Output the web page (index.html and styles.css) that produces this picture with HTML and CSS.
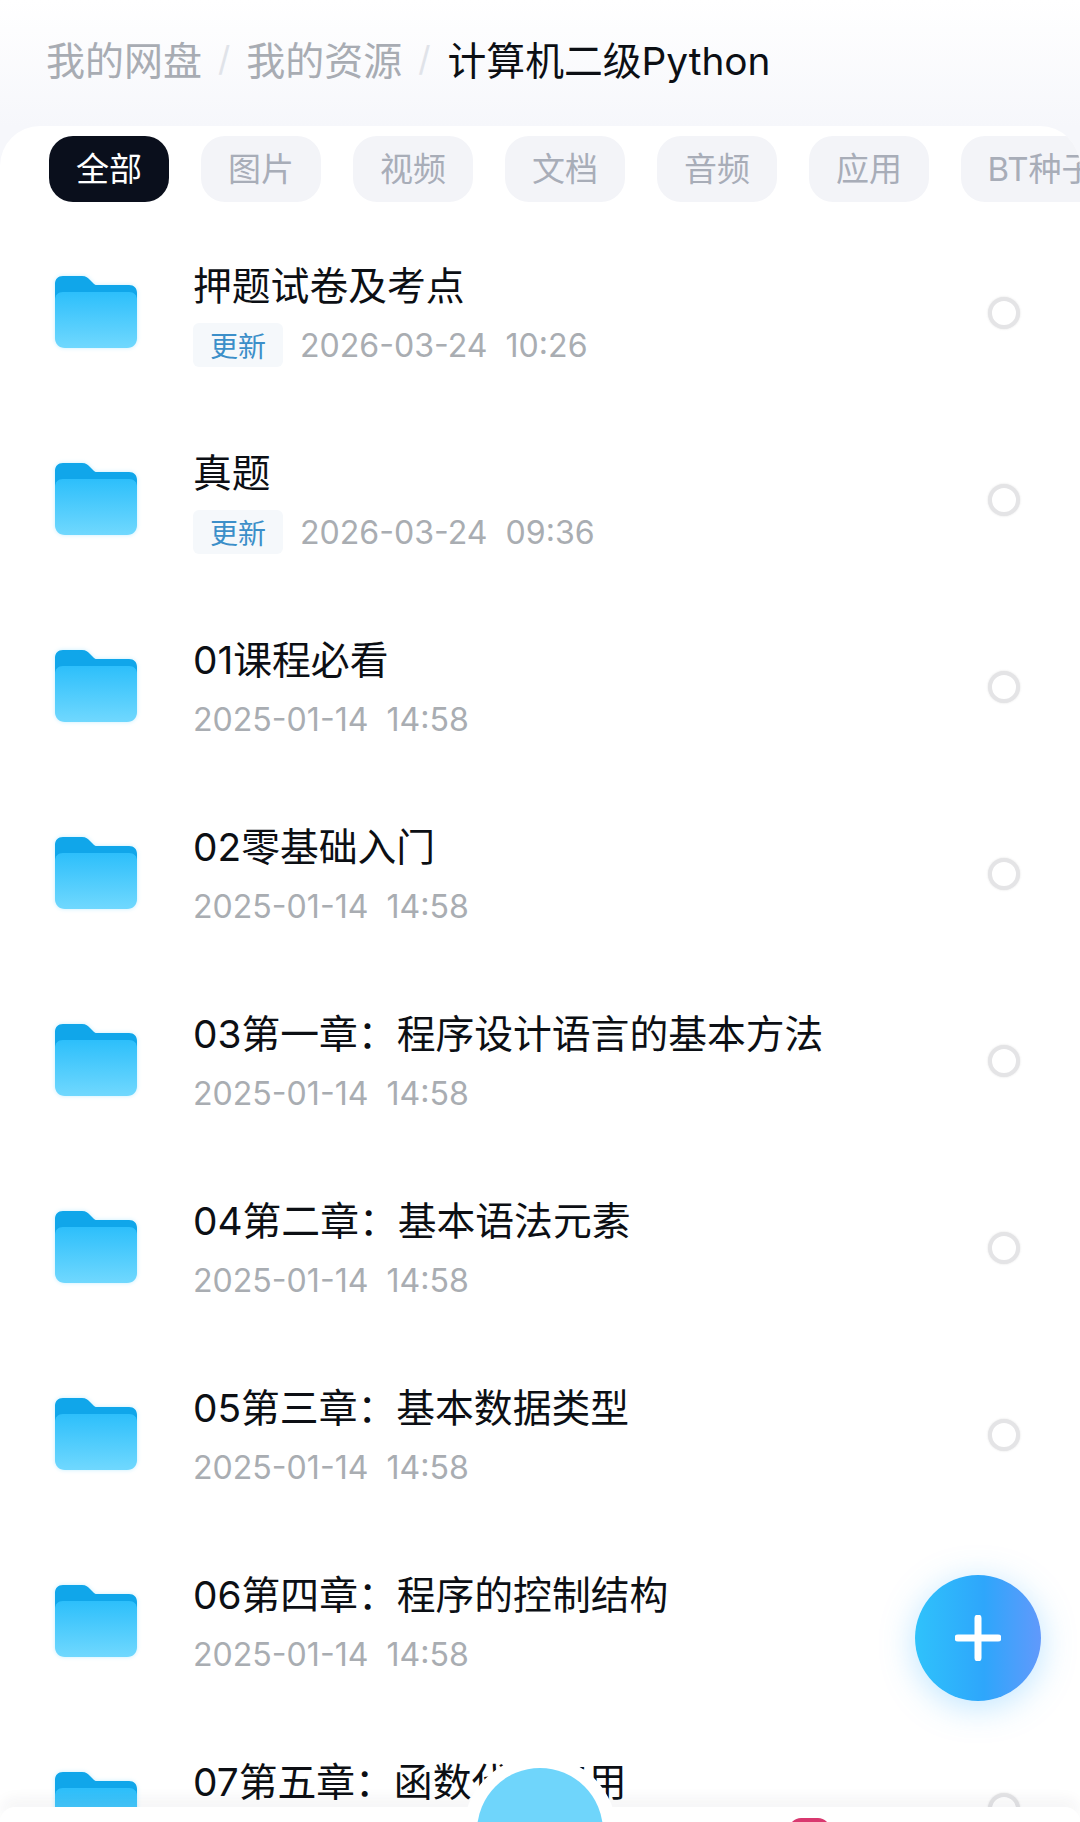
FILE: index.html
```html
<!DOCTYPE html>
<html lang="zh-CN">
<head>
<meta charset="utf-8">
<title>计算机二级Python</title>
<link rel="stylesheet" href="styles.css">
</head>
<body>
<svg class="defs" width="0" height="0" aria-hidden="true">
  <defs>
    <linearGradient id="front" x1="0" y1="0" x2="0" y2="1">
      <stop offset="0" stop-color="#2dbffb"/>
      <stop offset="1" stop-color="#70d8fe"/>
    </linearGradient>
    <symbol id="folder" viewBox="0 0 82 72">
      <path d="M8 0H27C31 0 33 2 35 4L39 8C40 9 41 9 43 9H74C79 9 82 12 82 17V30H0V8C0 3 3 0 8 0Z" fill="#10a6ea"/>
      <path d="M8 16H74C79 16 82 19 82 24V62C82 68 78 72 72 72H10C4 72 0 68 0 62V24C0 19 3 16 8 16Z" fill="url(#front)"/>
    </symbol>
  </defs>
</svg>
<div class="page">
  <header class="crumbs">
    <span class="crumb">我的网盘</span><span class="sep">/</span>
    <span class="crumb">我的资源</span><span class="sep">/</span>
    <span class="crumb current">计算机二级Python</span>
  </header>
  <main class="card">
    <nav class="tabs">
      <span class="tab active">全部</span>
      <span class="tab">图片</span>
      <span class="tab">视频</span>
      <span class="tab">文档</span>
      <span class="tab">音频</span>
      <span class="tab">应用</span>
      <span class="tab">BT种子</span>
    </nav>
    <ul class="list">
      <li class="row">
        <svg class="folder"><use href="#folder"/></svg>
        <div class="info"><div class="name">押题试卷及考点</div><div class="meta"><span class="tag">更新</span><span class="time">2026-03-24&nbsp;&nbsp;10:26</span></div></div>
        <span class="radio"></span>
      </li>
      <li class="row">
        <svg class="folder"><use href="#folder"/></svg>
        <div class="info"><div class="name">真题</div><div class="meta"><span class="tag">更新</span><span class="time">2026-03-24&nbsp;&nbsp;09:36</span></div></div>
        <span class="radio"></span>
      </li>
      <li class="row">
        <svg class="folder"><use href="#folder"/></svg>
        <div class="info"><div class="name">01课程必看</div><div class="meta"><span class="time">2025-01-14&nbsp;&nbsp;14:58</span></div></div>
        <span class="radio"></span>
      </li>
      <li class="row">
        <svg class="folder"><use href="#folder"/></svg>
        <div class="info"><div class="name">02零基础入门</div><div class="meta"><span class="time">2025-01-14&nbsp;&nbsp;14:58</span></div></div>
        <span class="radio"></span>
      </li>
      <li class="row">
        <svg class="folder"><use href="#folder"/></svg>
        <div class="info"><div class="name">03第一章：程序设计语言的基本方法</div><div class="meta"><span class="time">2025-01-14&nbsp;&nbsp;14:58</span></div></div>
        <span class="radio"></span>
      </li>
      <li class="row">
        <svg class="folder"><use href="#folder"/></svg>
        <div class="info"><div class="name">04第二章：基本语法元素</div><div class="meta"><span class="time">2025-01-14&nbsp;&nbsp;14:58</span></div></div>
        <span class="radio"></span>
      </li>
      <li class="row">
        <svg class="folder"><use href="#folder"/></svg>
        <div class="info"><div class="name">05第三章：基本数据类型</div><div class="meta"><span class="time">2025-01-14&nbsp;&nbsp;14:58</span></div></div>
        <span class="radio"></span>
      </li>
      <li class="row">
        <svg class="folder"><use href="#folder"/></svg>
        <div class="info"><div class="name">06第四章：程序的控制结构</div><div class="meta"><span class="time">2025-01-14&nbsp;&nbsp;14:58</span></div></div>
        <span class="radio"></span>
      </li>
      <li class="row">
        <svg class="folder"><use href="#folder"/></svg>
        <div class="info"><div class="name">07第五章：函数代码复用</div><div class="meta"><span class="time">2025-01-14&nbsp;&nbsp;14:58</span></div></div>
        <span class="radio"></span>
      </li>
    </ul>
  </main>
  <button class="fab" type="button" aria-label="新建">
    <svg width="46" height="46" viewBox="0 0 46 46"><path d="M3 23H43M23 3V43" stroke="#fff" stroke-width="7" stroke-linecap="round" fill="none"/></svg>
  </button>
  <footer class="bottom">
    <span class="center-halo"></span>
    <span class="center-btn"></span>
    <span class="badge"></span>
  </footer>
</div>
</body>
</html>
```
FILE: styles.css
```css
* { box-sizing: border-box; }
html, body { margin: 0; padding: 0; }
body {
  width: 1080px;
  height: 1822px;
  overflow: hidden;
  background: #fff;
  font-family: "Inter", "Noto Sans CJK SC", sans-serif;
}
.defs { position: absolute; }
.page {
  position: relative;
  width: 1080px;
  height: 1822px;
  overflow: hidden;
  background: linear-gradient(#ffffff 0, #f6f7fb 126px);
}
.crumbs {
  height: 126px;
  padding: 0 0 10px 46px;
  display: flex;
  align-items: center;
  font-size: 39px;
  color: #a8acb3;
  white-space: nowrap;
}
.sep { margin: 0 16px; color: #e0e3e9; font-size: 34px; }
.current { margin-left: 1px; font-size: 38.8px; color: #0c0f14; }
.card {
  background: #fff;
  border-radius: 40px 40px 0 0;
  height: 1696px;
  overflow: hidden;
}
.tabs {
  display: flex;
  gap: 32px;
  padding: 10px 0 0 49px;
  height: 93px;
}
.tab {
  flex: none;
  width: 120px;
  height: 66px;
  padding-bottom: 4px;
  border-radius: 24px;
  background: #f3f4f8;
  color: #a8adb8;
  font-size: 33px;
  display: flex;
  align-items: center;
  justify-content: center;
  white-space: nowrap;
}
.tab:last-child { width: 160px; }
.tab.active { background: #0a0f1c; color: #fff; }
.list { list-style: none; margin: 0; padding: 0; }
.row {
  height: 187px;
  display: flex;
  align-items: center;
  padding-left: 55px;
}
.folder {
  flex: none;
  width: 82px;
  height: 72px;
  margin-bottom: 2px;
  filter: drop-shadow(0 0 2px rgba(90, 205, 255, .35));
}
.info {
  flex: 1;
  min-width: 0;
  margin: 5px 0 0 56px;
  display: flex;
  flex-direction: column;
  gap: 15px;
}
.name {
  font-size: 38.8px;
  line-height: 46px;
  color: #0c0f14;
  white-space: nowrap;
}
.meta {
  display: flex;
  align-items: center;
  height: 44px;
}
.tag {
  width: 90px;
  height: 44px;
  margin: -2px 17px 0 0;
  border-radius: 6px;
  background: #f5f8fb;
  color: #3c8fc9;
  font-size: 28px;
  display: flex;
  align-items: center;
  justify-content: center;
}
.time { font-size: 32.1px; color: #a9adb2; white-space: nowrap; }
.radio {
  flex: none;
  width: 32px;
  height: 32px;
  margin-right: 60px;
  border-radius: 50%;
  border: 4px solid #e4e4e6;
  background: #fff;
  box-shadow: 0 0 2px rgba(120, 120, 125, .25);
}
.fab {
  position: absolute;
  left: 915px;
  top: 1575px;
  width: 126px;
  height: 126px;
  padding: 0;
  border: 0;
  border-radius: 50%;
  background: linear-gradient(90deg, #2fc2fb, #2ea6fb 55%, #6199fb);
  box-shadow: 0 6px 34px rgba(70, 180, 255, .35);
  display: flex;
  align-items: center;
  justify-content: center;
}
.bottom {
  position: absolute;
  left: 0;
  right: 0;
  top: 1807px;
  height: 15px;
  background: #fff;
  border-radius: 22px 22px 0 0;
  box-shadow: 0 -8px 14px rgba(30, 40, 60, .05);
}
.center-halo {
  position: absolute;
  left: 463px;
  top: -51px;
  width: 154px;
  height: 154px;
  border-radius: 50%;
  background: #fff;
}
.center-btn {
  position: absolute;
  left: 477px;
  top: -39px;
  width: 126px;
  height: 126px;
  border-radius: 50%;
  background: #6fd5fb;
}
.badge {
  position: absolute;
  left: 789px;
  top: 11px;
  width: 41px;
  height: 30px;
  border-radius: 12px 12px 0 0;
  background: #d9386f;
}
```
